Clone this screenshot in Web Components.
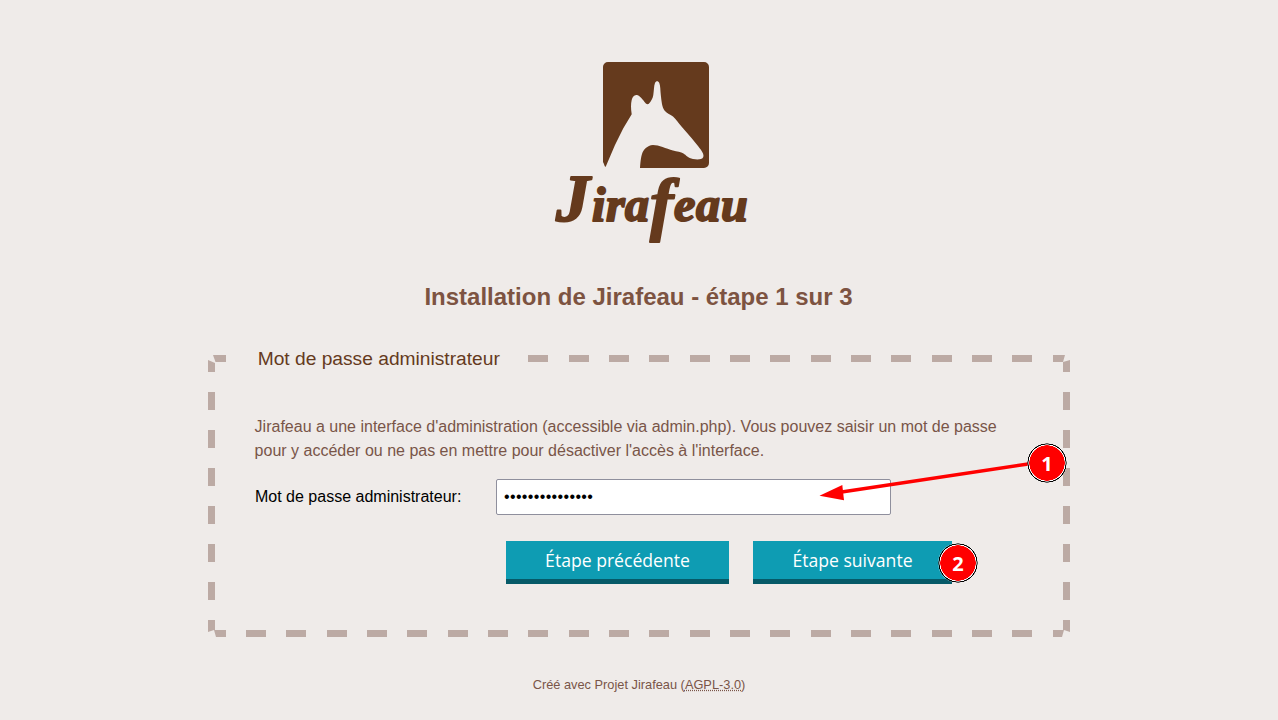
<!DOCTYPE html>
<html lang="fr">
<head>
<meta charset="utf-8">
<title>Installation de Jirafeau</title>
<style>
  html, body { margin: 0; padding: 0; background: #efebe9; }
  body { font-family: "Liberation Sans", Arial, sans-serif; color: #795548; }
</style>
</head>
<body>
<install-page>
  <jira-logo slot="logo"></jira-logo>
  <span slot="title">Installation de Jirafeau - étape 1 sur 3</span>
  <dashed-box legend="Mot de passe administrateur">
    <p>Jirafeau a une interface d'administration (accessible via admin.php). Vous pouvez saisir un mot de passe pour y accéder ou ne pas en mettre pour désactiver l'accès à l'interface.</p>
    <password-row label="Mot de passe administrateur:" value="jirafeau-secret"></password-row>
    <step-buttons></step-buttons>
  </dashed-box>
  <span slot="footer">Créé avec Projet Jirafeau (<abbr title="GNU Affero General Public License v3.0">AGPL-3.0</abbr>)</span>
</install-page>

<script>
const templatePage = document.createElement('template');
templatePage.innerHTML = `
  <style>
    :host { display: block; height: 720px; overflow: hidden; position: relative; }
    .logo { display: flex; justify-content: center; padding-top: 62px; height: 186px; }
    h1 { margin: 34px 1px 0 0; height: 30px; line-height: 30px; font-size: 24px; font-weight: 700; text-align: center; color: #7d5341; }
    .main { padding: 43px 208px 0; }
    footer { margin-top: 40px; font-size: 12.8px; line-height: 16px; text-align: center; color: #795548; }
  </style>
  <div class="logo"><slot name="logo"></slot></div>
  <h1><slot name="title"></slot></h1>
  <div class="main"><slot></slot></div>
  <footer><slot name="footer"></slot></footer>
  <step-marker number="1" style="left: 1027px; top: 443px;"></step-marker>
  <step-marker number="2" style="left: 938px; top: 543px;"></step-marker>
  <svg class="arrow" style="position:absolute;left:0;top:0;pointer-events:none" width="1278" height="720">
    <line x1="1030" y1="463.700" x2="840" y2="492.200" stroke="#ff0000" stroke-width="3.400"/>
    <polygon points="819.500,495.700 842.300,485 844,500.300" fill="#ff0000"/>
  </svg>
`;

class InstallPage extends HTMLElement {
  constructor() {
    super();
    this.attachShadow({ mode: 'open' });
  }
  connectedCallback() {
    this.shadowRoot.appendChild(document.importNode(templatePage.content, true));
  }
}

class JiraLogo extends HTMLElement {
  constructor() {
    super();
    this.attachShadow({ mode: 'open' });
    this.shadowRoot.innerHTML = `
      <style>
        :host { display: block; width: 222px; height: 190px; }
        svg { display: block; overflow: visible; }
        text { font-family: "Liberation Serif", serif; font-style: italic; font-weight: 700; font-size: 48px; fill: #653a1d; stroke: #653a1d; stroke-width: 2px; stroke-linejoin: round; }
      </style>
      <svg width="222" height="190" viewBox="0 0 222 190">
        <path fill="#653a1d" d="M80 0H176a5 5 0 0 1 5 5V101a5 5 0 0 1-5 5H112C112.500 99 113 95 114 92C115.500 87.500 119 83.500 125 83C131 83 138 86.500 145 88.500C149 89.500 153 90 155.500 91.500C158 93 160 96 165 97C168 97.500 171 97.500 173 97C175.500 96.200 176 94 175 91.500C174 89 172 86.500 170 84L163.700 76.300L153.700 64.700C150.500 61 148 57 145 54.500C142 52 138.500 51.500 136.500 48.500C134 45 133.500 39 132.800 33C132.300 28 132.500 24 131.300 21C130.300 18.500 128 18.500 127 21C125.800 24 126 29 125.300 33C124.800 36.500 123 39 121.500 41C120 42.800 118.500 42.500 117 40.500C115 38 112 33.500 108.700 33C106 32.700 104.500 35 103.700 38C102.800 42 102.800 46 103.700 52.300L95.300 66.300L87 83L77.700 104.700C77 105.500 76.500 103 75 100V5a5 5 0 0 1 5-5Z"/>
        <text><tspan x="28" y="159" font-size="68">J</tspan><tspan x="64" y="159">i</tspan><tspan x="78">r</tspan><tspan x="97">a</tspan><tspan x="122" y="165" font-size="70">f</tspan><tspan x="146" y="159">e</tspan><tspan x="168">a</tspan><tspan x="193">u</tspan></text>
      </svg>
    `;
  }
}

class DashedBox extends HTMLElement {
  constructor() {
    super();
    this.attachShadow({ mode: 'open' });
    this.shadowRoot.innerHTML = `
      <style>
        :host {
          --dash: #bcaaa4;
          --h-dash: repeating-linear-gradient(90deg, var(--dash) 0 17.700px, transparent 17.700px 37.970px, var(--dash) 37.970px 40.330px);
          --v-dash: repeating-linear-gradient(180deg, var(--dash) 0 17px, transparent 17px 37px, var(--dash) 37px 38px);
          display: block;
          position: relative;
          box-sizing: border-box;
          width: 862px;
          height: 282px;
          padding: 0 46px 0 47px;
          background:
            var(--h-dash) 0 0 / 100% 7px no-repeat,
            var(--h-dash) 0 100% / 100% 7px no-repeat,
            var(--v-dash) 0 0 / 7px 100% no-repeat,
            var(--v-dash) 100% 0 / 7px 100% no-repeat;
        }
        .legend {
          display: block;
          width: fit-content;
          margin-left: -29px;
          padding: 0 28px 0 31.700px;
          height: 7px;
          font-size: 19.200px;
          line-height: 7px;
          color: #653a1d;
          background: #efebe9;
        }
        .body { padding-top: 53px; }
        ::slotted(p) { margin: 0 0 16px -0.400px; font-size: 16px; line-height: 24px; color: #795548; }
        /* the reference border has mitred gaps at its corners */
        .corner { position: absolute; width: 8px; height: 8px; background: #efebe9; }
        .tl { left: 0; top: 0; clip-path: polygon(0 0, 5px 0, 7.500px 7px, 7px 8px, 0 5px); }
        .tr { right: 0; top: 0; clip-path: polygon(100% 0, 3px 0, 1px 7px, 100% 5px); }
        .bl { left: 0; bottom: 0; clip-path: polygon(0 3px, 6px 1px, 8px 100%, 0 100%); }
        .br { right: 0; bottom: 0; clip-path: polygon(100% 3px, 2px 1px, 0 100%, 100% 100%); }
      </style>
      <div class="legend"></div>
      <div class="body"><slot></slot></div>
      <i class="corner tl"></i><i class="corner tr"></i><i class="corner bl"></i><i class="corner br"></i>
    `;
    this.shadowRoot.querySelector('.legend').textContent = this.getAttribute('legend');
  }
}

class PasswordRow extends HTMLElement {
  constructor() {
    super();
    this.attachShadow({ mode: 'open' });
    this.shadowRoot.innerHTML = `
      <style>
        :host { display: flex; align-items: center; height: 36px; }
        label { width: 241px; font-size: 16px; color: #000; }
        input {
          box-sizing: border-box;
          width: 395px;
          height: 36px;
          margin: 0;
          padding: 0 7px;
          border: 1px solid #8f8f9d;
          border-radius: 2px;
          background: #fff;
          color: #000;
          font: 16px "Liberation Sans", Arial, sans-serif;
          letter-spacing: 0.350px;
          outline: none;
        }
      </style>
      <label for="pw"></label>
      <input id="pw" type="password">
    `;
    this.shadowRoot.querySelector('label').textContent = this.getAttribute('label');
    this.shadowRoot.querySelector('input').value = this.getAttribute('value');
  }
}

class StepButtons extends HTMLElement {
  constructor() {
    super();
    this.attachShadow({ mode: 'open' });
    this.shadowRoot.innerHTML = `
      <style>
        :host { display: flex; gap: 24px; margin-top: 26px; padding-left: 251px; }
        button {
          box-sizing: border-box;
          height: 43px;
          padding: 0 0 1px;
          border: 0;
          border-bottom: 5px solid #065a68;
          border-radius: 0;
          background: #0e9cb3;
          color: #fff;
          font: 17.600px "Open Sans", sans-serif;
          cursor: pointer;
        }
        .prev { width: 223px; }
        .next { width: 199px; }
      </style>
      <button class="prev" type="button">Étape précédente</button>
      <button class="next" type="button">Étape suivante</button>
    `;
  }
}

class StepMarker extends HTMLElement {
  constructor() {
    super();
    this.attachShadow({ mode: 'open' });
    this.shadowRoot.innerHTML = `
      <style>
        :host {
          position: absolute;
          display: flex;
          align-items: center;
          justify-content: center;
          width: 40px;
          height: 40px;
          border-radius: 50%;
          background: radial-gradient(circle, #ff0000 0 17.500px, #fff 17.800px 18.400px, #000 18.700px 19.400px, rgba(255,255,255,.4) 19.700px);
          color: #fff;
          font: 700 20px "Open Sans", sans-serif;
          z-index: 2;
        }
      </style>
      <span></span>
    `;
    this.shadowRoot.querySelector('span').textContent = this.getAttribute('number');
  }
}

customElements.define('step-marker', StepMarker);
customElements.define('install-page', InstallPage);
customElements.define('jira-logo', JiraLogo);
customElements.define('dashed-box', DashedBox);
customElements.define('password-row', PasswordRow);
customElements.define('step-buttons', StepButtons);
</script>
</body>
</html>
